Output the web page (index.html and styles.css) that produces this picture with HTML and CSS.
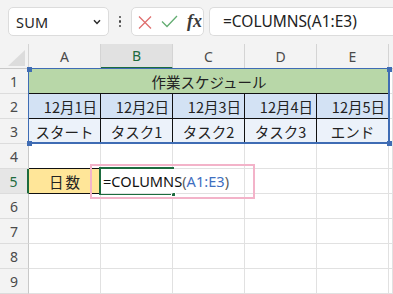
FILE: index.html
```html
<!DOCTYPE html>
<html lang="ja">
<head>
<meta charset="utf-8">
<title>Excel COLUMNS</title>
<link rel="stylesheet" href="styles.css">
</head>
<body>
<div class="app">
  <div class="toolbar">
    <div class="namebox">
      <span class="name">SUM</span>
      <svg class="chev" width="8" height="6" viewBox="0 0 8 6"><path d="M1 1.2 L4 4.4 L7 1.2" fill="none" stroke="#2b2b2b" stroke-width="1.5"/></svg>
    </div>
    <div class="dots"><i></i><i></i><i></i></div>
    <div class="fxbox">
      <svg class="cancel" width="14" height="13" viewBox="0 0 14 13"><path d="M1 0.5 L13 12.5 M13 0.5 L1 12.5" stroke="#df6f6f" stroke-width="1.3" fill="none"/></svg>
      <svg class="enter" width="17" height="13" viewBox="0 0 17 13"><path d="M1 6.5 L6 11.5 L16 1" stroke="#63ad72" stroke-width="1.3" fill="none"/></svg>
      <span class="fx">fx</span>
    </div>
    <div class="formula">=COLUMNS(A1:E3)</div>
  </div>

  <div class="sheet">
    <div class="corner"><svg width="17" height="16" viewBox="0 0 17 16"><path d="M17 0 L17 16 L0 16 Z" fill="#dcdcdc"/></svg></div>
    <div class="ch">A</div>
    <div class="ch ch-sel">B</div>
    <div class="ch">C</div>
    <div class="ch">D</div>
    <div class="ch">E</div>
    <div class="ch ch-rest"></div>

    <div class="rh">1</div>
    <div class="c title">作業スケジュール</div>
    <div class="c"></div>

    <div class="rh">2</div>
    <div class="c date">12月1日</div>
    <div class="c date">12月2日</div>
    <div class="c date">12月3日</div>
    <div class="c date">12月4日</div>
    <div class="c date">12月5日</div>
    <div class="c"></div>

    <div class="rh">3</div>
    <div class="c task">スタート</div>
    <div class="c task">タスク1</div>
    <div class="c task">タスク2</div>
    <div class="c task">タスク3</div>
    <div class="c task">エンド</div>
    <div class="c"></div>

    <div class="rh">4</div>
    <div class="c above-label"></div>
    <div class="c"></div>
    <div class="c"></div>
    <div class="c"></div>
    <div class="c"></div>
    <div class="c"></div>

    <div class="rh rh-sel">5</div>
    <div class="c label">日数</div>
    <div class="c editing"><span class="fn">=COLUMNS</span><span class="paren">(</span><span class="ref">A1:E3</span><span class="paren">)</span></div>
    <div class="c"></div>
    <div class="c"></div>
    <div class="c"></div>
    <div class="c"></div>

    <div class="rh">6</div>
    <div class="c"></div><div class="c"></div><div class="c"></div><div class="c"></div><div class="c"></div><div class="c"></div>
    <div class="rh">7</div>
    <div class="c"></div><div class="c"></div><div class="c"></div><div class="c"></div><div class="c"></div><div class="c"></div>
    <div class="rh">8</div>
    <div class="c"></div><div class="c"></div><div class="c"></div><div class="c"></div><div class="c"></div><div class="c"></div>
    <div class="rh">9</div>
    <div class="c"></div><div class="c"></div><div class="c"></div><div class="c"></div><div class="c"></div><div class="c"></div>

    <div class="range"><i class="h tl"></i><i class="h tr"></i><i class="h bl"></i><i class="h br"></i></div>
    <div class="active"><i class="fill"></i></div>
    <div class="note"></div>
  </div>
</div>
</body>
</html>
```

FILE: styles.css
```css
* { box-sizing: border-box; }
html, body { margin: 0; padding: 0; }
body {
  width: 393px;
  height: 294px;
  overflow: hidden;
  background: #ffffff;
  font-family: "Noto Sans", "Open Sans", "Liberation Sans", sans-serif;
  color: #222;
}
.app { width: 393px; height: 294px; overflow: hidden; }

/* toolbar */
.toolbar {
  height: 44px;
  background: #f3f3f3;
  display: flex;
  align-items: flex-start;
  padding: 7px 0 0 8px;
}
.namebox {
  width: 101px;
  height: 29px;
  background: #fff;
  border: 1px solid #dcdcdc;
  border-radius: 5px;
  display: flex;
  align-items: center;
  justify-content: space-between;
  padding: 0 7px 0 7px;
}
.name { font-size: 14.5px; color: #262626; letter-spacing: 0.2px; }
.chev { margin-top: 1px; }
.dots {
  width: 4px;
  height: 29px;
  margin-left: 9px;
  display: flex;
  flex-direction: column;
  align-items: center;
  justify-content: center;
  gap: 2px;
}
.dots i { display: block; width: 2.5px; height: 2.5px; border-radius: 50%; background: #444; }
.fxbox {
  margin-left: 9px;
  width: 73px;
  height: 29px;
  background: #fff;
  border: 1px solid #dcdcdc;
  border-radius: 5px;
  display: flex;
  align-items: center;
  padding-left: 6px;
}
.cancel { margin-top: 1px; }
.enter { margin-left: 9px; }
.fx {
  margin-left: 9px;
  font-family: "Liberation Serif", "DejaVu Serif", serif;
  font-style: italic;
  font-weight: bold;
  font-size: 18px;
  color: #3a3a3a;
  line-height: 1;
  margin-top: -2px;
}
.formula {
  margin-left: 5px;
  flex: 1;
  height: 29px;
  background: #fff;
  border: 1px solid #dcdcdc;
  border-right: none;
  border-radius: 5px 0 0 5px;
  padding-left: 13px;
  font-size: 15.5px;
  line-height: 27px;
  color: #222;
  white-space: nowrap;
}

/* sheet */
.sheet {
  position: relative;
  display: grid;
  grid-template-columns: 29px repeat(5, 72px) 1fr;
  grid-template-rows: repeat(10, 25px);
  background: #fff;
}
.corner, .ch, .rh {
  background: #f3f3f3;
  border-right: 1px solid #d4d4d4;
  border-bottom: 1px solid #c8c8c8;
  color: #4a4a4a;
  font-size: 14px;
  display: flex;
  align-items: center;
  justify-content: center;
}
.corner { justify-content: flex-end; align-items: flex-end; padding: 0 3px 2px 0; }
.corner svg { display: block; }
.ch-sel {
  background: #e1e1e1;
  color: #1d6b3e;
  border-bottom: 2px solid #1d6b3e;
}
.ch-rest { border-right: none; }
.rh { border-right: 1px solid #c8c8c8; border-bottom: 1px solid #dcdcdc; padding-top: 1px; }
.rh-sel { background: #e6e6e6; color: #1d6b3e; border-right: 2px solid #1d6b3e; }

.c {
  border-right: 1px solid #e1e1e1;
  border-bottom: 1px solid #e1e1e1;
  font-family: "Noto Sans CJK JP", "Noto Sans", sans-serif;
  font-size: 14.5px;
  color: #222;
  display: flex;
  align-items: center;
  white-space: nowrap;
}
.title {
  grid-column: span 5;
  background: #b8d7a8;
  border-right: none;
  border-bottom: 1px solid #111;
  justify-content: center;
}
.date {
  background: #d3e2f4;
  border-right: 1px solid #111;
  border-bottom: 1px solid #111;
  justify-content: flex-end;
  padding-right: 3px;
}
.task {
  background: #ecf2fa;
  border-right: 1px solid #111;
  border-bottom: 1px solid #111;
  justify-content: center;
}
.above-label { border-bottom: 1px solid #111; }
.label {
  background: #ffe699;
  border-right: 1px solid #111;
  border-bottom: 1px solid #111;
  justify-content: center;
  letter-spacing: 2px;
  padding-left: 2px;
}
.editing {
  position: relative;
  z-index: 3;
  overflow: visible;
  border-right-color: transparent;
  padding-left: 2px;
  font-family: "Noto Sans", "Open Sans", sans-serif;
  font-size: 14.6px;
}
.fn { color: #111; }
.paren { color: #5a5a5a; }
.ref { color: #3f6fbf; }

/* overlays */
.range {
  position: absolute;
  left: 28px;
  top: 24px;
  width: 362px;
  height: 76px;
  border-style: solid;
  border-color: #3f6cb4;
  border-width: 1px 2px 2px 1px;
  z-index: 2;
}
.h { position: absolute; width: 5px; height: 5px; background: #3f6cb4; }
.tl { left: -2px; top: -2px; }
.tr { right: -4px; top: -2px; }
.bl { left: -2px; bottom: -4px; }
.br { right: -4px; bottom: -4px; }
.active {
  position: absolute;
  left: 99px;
  top: 123px;
  width: 75px;
  height: 28px;
  border: 2px solid #1d6b3e;
  border-right: none;
  z-index: 2;
}
.fill {
  position: absolute;
  right: -2px;
  bottom: -4px;
  width: 5px;
  height: 5px;
  background: #1d6b3e;
  border: 1px solid #fff;
}
.note {
  position: absolute;
  left: 90px;
  top: 120px;
  width: 165px;
  height: 35px;
  border: 2px solid #f3b3c9;
  z-index: 4;
}
```
